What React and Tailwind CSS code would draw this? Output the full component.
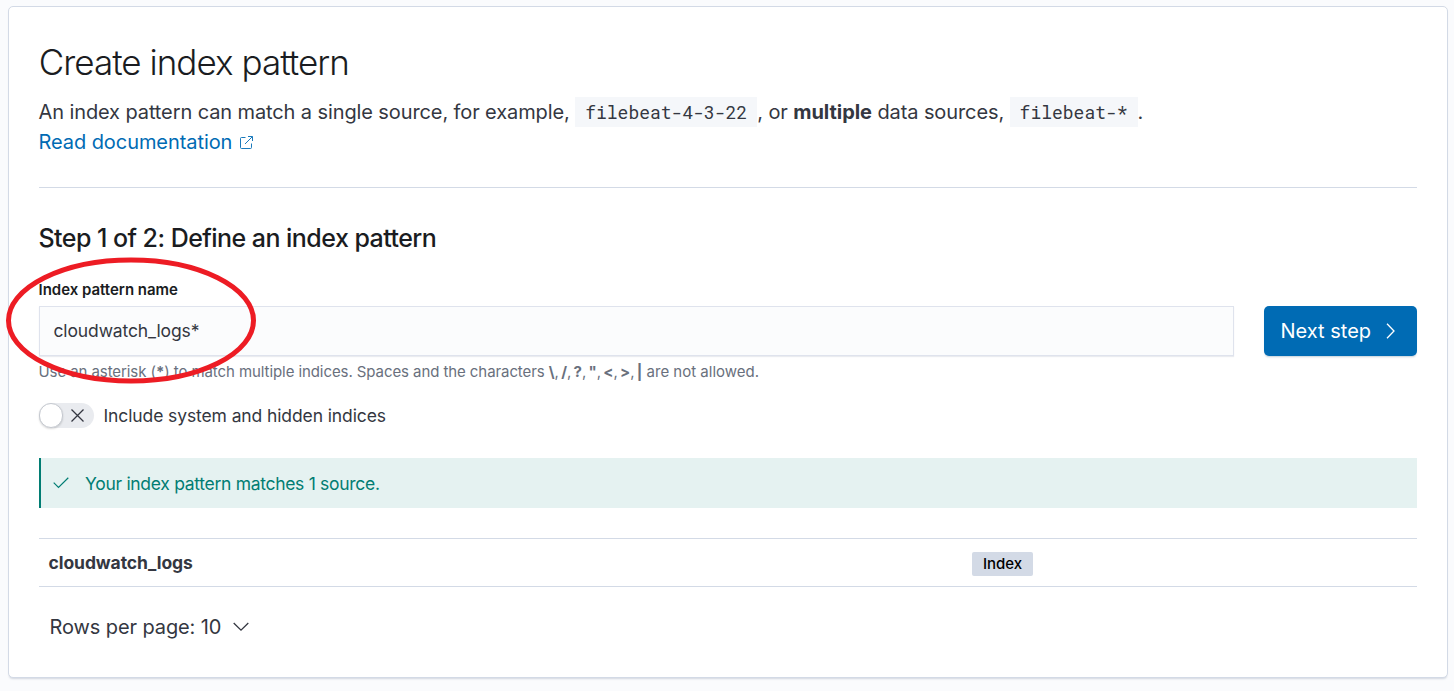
import React from "react";

function Code({ children }) {
  return (
    <code className="inline-block h-[30px] bg-[#f5f7fa] px-[10px] align-top font-['Roboto_Mono','Liberation_Mono',monospace] text-[18px] leading-[31px] tracking-[0px] whitespace-nowrap">
      {children}
    </code>
  );
}

function Header() {
  return (
    <header className="border-b border-[#d3dae6] pb-[30px]">
      <h1 className="-ml-[0.3px] h-[60px] pt-[5px] text-[35px] leading-[40px] font-light tracking-[-0.97px] text-[#1a1c21]">
        Create index pattern
      </h1>
      <p className="-ml-[0.5px] h-[30px] text-[20px] leading-[30px] tracking-[-0.105px] whitespace-nowrap">
        An index pattern can match a single source, for example, <Code>filebeat-4-3-22</Code>
        <span>, or </span>
        <strong className="font-bold tracking-[-0.05px]">multiple</strong> data sources, <Code>filebeat-*</Code>
        <span>.</span>
      </p>
      <a className="-ml-[0.5px] flex h-[30px] items-center text-[20px] leading-[30px] tracking-[-0.07px] text-[#006bb4]">
        Read documentation
        <svg className="mt-[1px] ml-[7.5px]" width="13" height="13" viewBox="0 0 13 13" fill="none" stroke="currentColor" strokeWidth="0.9">
          <path d="M5.5 1.5h-4a1 1 0 0 0-1 1v9a1 1 0 0 0 1 1h9a1 1 0 0 0 1-1v-4M8 .5h4.5V5M12.2.8 5 8" />
        </svg>
      </a>
    </header>
  );
}

function PatternForm() {
  return (
    <section>
      <h2 className="-ml-[0.5px] mt-[30px] h-[40px] text-[25px] leading-[40px] font-medium tracking-[-0.54px] text-[#1a1c21]">
        Step 1 of 2: Define an index pattern
      </h2>
      <div className="flex gap-[30px]">
        <div className="flex-1">
          <label className="-ml-[0.5px] mt-[22px] block h-[26px] text-[15px] leading-[20px] font-semibold tracking-[-0.02px] text-[#1a1c21]">
            Index pattern name
          </label>
          <div className="flex h-[50px] items-center border border-[#dfe3ed] bg-[#fbfcfd] px-[13.5px] text-[17.5px] tracking-[-0.13px] shadow-[0_1px_1px_rgba(152,162,179,0.2)]">
            cloudwatch_logs*
          </div>
          <div className="-ml-[0.5px] mt-[5px] h-[22px] text-[15px] leading-[22px] tracking-[-0.08px] whitespace-nowrap text-[#69707d]">
            Use an asterisk (<strong>*</strong>) to match multiple indices. Spaces and the characters{" "}
            <span className="tracking-[0px] [word-spacing:-2px]">
              <strong>\</strong>, <strong>/</strong>, <strong>?</strong>, <strong>"</strong>, <strong>&lt;</strong>,{" "}
              <strong>&gt;</strong>, <strong>|</strong>
            </span>
            <span className="tracking-[0px]"> are not allowed.</span>
          </div>
        </div>
        <button className="mt-[48px] flex h-[50px] w-[153px] items-center rounded-[5px] bg-[#006bb4] pl-[16.5px] text-[20px] text-white shadow-[0_2px_2px_-1px_rgba(54,97,126,0.3)]">
          Next step
          <svg className="ml-[15px]" width="10" height="16" viewBox="0 0 10 16" fill="none" stroke="currentColor" strokeWidth="1.3">
            <path d="m1 .8 7 7.2-7 7.2" />
          </svg>
        </button>
      </div>
      <div className="mt-[19px] flex h-[26px] items-center text-[17.5px]">
        <span className="flex h-[25px] w-[55px] items-center rounded-full bg-[#e9ebef]">
          <span className="h-[25px] w-[24px] rounded-full border border-[#c5c9d0] bg-white shadow-[0_1px_2px_rgba(0,0,0,0.15)]" />
          <svg className="ml-[8px]" width="13" height="13" viewBox="0 0 13 13" fill="none" stroke="#343741" strokeWidth="1.3">
            <path d="m.5.5 12 12m0-12-12 12" />
          </svg>
        </span>
        <span className="ml-[9.5px] pt-[2px] tracking-[-0.11px]">Include system and hidden indices</span>
      </div>
    </section>
  );
}

function Results() {
  return (
    <section>
      <div className="mt-[30px] flex h-[50px] items-center border-l-2 border-[#017d73] bg-[#e5f2f1] pl-[12px] text-[17.5px] tracking-[-0.3px] text-[#017d73]">
        <svg width="16" height="12" viewBox="0 0 16 12" fill="none" stroke="currentColor" strokeWidth="1.2">
          <path d="m.7 5.6 4.8 4.9L15.3.8" />
        </svg>
        <span className="ml-[16px] pt-[2px]">Your index pattern matches 1 source.</span>
      </div>
      <div className="mt-[30px] flex h-[49px] items-center border-y border-[#d3dae6] pl-[10px] text-[17.5px]">
        <strong className="-ml-[0.5px] w-[923.5px] pt-[2px] font-bold tracking-[-0.07px]">cloudwatch_logs</strong>
        <span className="mt-[3px] flex h-[24px] w-[61px] items-center justify-center rounded-[2px] bg-[#d3dae6] text-[15px] font-medium text-black">
          Index
        </span>
      </div>
      <div className="mt-[25px] flex h-[30px] items-center pl-[10.5px] text-[20px]">
        <span className="tracking-[-0.1px]">Rows per page: 10</span>
        <svg className="ml-[11.5px]" width="16" height="10" viewBox="0 0 16 10" fill="none" stroke="currentColor" strokeWidth="1.3">
          <path d="m.7 1 7.3 7.2L15.3 1" />
        </svg>
      </div>
    </section>
  );
}

export default function App() {
  return (
    <div className="h-[691px] w-[1454px] overflow-hidden bg-[#fafbfd] pt-[6px] pl-[8px] font-[Inter,sans-serif] text-[#343741]">
      <main className="relative h-[672px] w-[1440px] rounded-[5px] border border-[#d3dae6] bg-white px-[30px] pt-[30px] shadow-[0_2px_2px_-1px_rgba(152,162,179,0.4)]">
        <Header />
        <PatternForm />
        <Results />
        <svg className="absolute top-[249px] left-[-4px]" width="252" height="130" viewBox="0 0 252 130" fill="none" stroke="#ed1c24" strokeWidth="5">
          <ellipse cx="126" cy="64.5" rx="122.5" ry="60.5" />
        </svg>
      </main>
    </div>
  );
}
